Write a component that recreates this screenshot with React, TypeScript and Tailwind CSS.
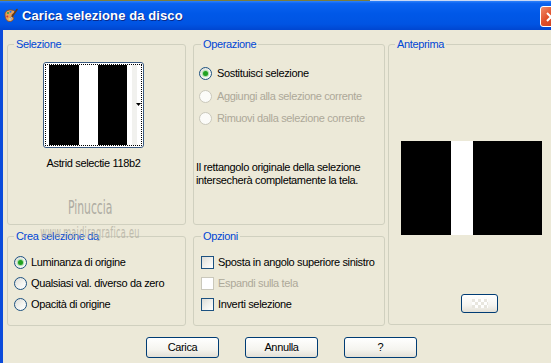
import React from 'react';

// XP-style "Carica selezione da disco" dialog
const FONT = "font-['Liberation_Sans',Arial,sans-serif]";

const Radio: React.FC<{ checked?: boolean; disabled?: boolean }> = ({ checked, disabled }) => (
    <span
        className={`inline-flex shrink-0 w-[13px] h-[13px] rounded-full border items-center justify-center ${
            disabled
                ? 'border-[#CAC8BB] bg-[#FBFBF8]'
                : 'border-[#1C5180] bg-[linear-gradient(135deg,#DCDCD7_0%,#F4F4F0_55%,#FFFFFF_100%)]'
        }`}
    >
        {checked && <span className="w-[5px] h-[5px] rounded-full bg-[#21A121] shadow-[0_0_1px_1px_#A4DCA4]" />}
    </span>
);

const Check: React.FC<{ disabled?: boolean }> = ({ disabled }) => (
    <span
        className={`inline-block shrink-0 w-[13px] h-[13px] border ${
            disabled
                ? 'border-[#CAC8BB] bg-white'
                : 'border-[#1C5180] bg-[linear-gradient(135deg,#DCDCD7_0%,#F2F2EE_55%,#FFFFFF_100%)]'
        }`}
    />
);

const GroupBox: React.FC<{ label: string; className?: string; labelLeft?: string; children?: React.ReactNode }> = ({
    label,
    className,
    labelLeft = 'left-[6px]',
    children,
}) => (
    <div className={`relative shrink-0 border border-[#D0D0BF] rounded-[3px] ${className ?? ''}`}>
        <span className={`absolute -top-[7px] ${labelLeft} px-[2px] bg-[#ECE9D8] text-[#0046D5] leading-[13px] whitespace-nowrap`}>
            {label}
        </span>
        {children}
    </div>
);

const XpButton: React.FC<{ children?: React.ReactNode; className?: string }> = ({ children, className }) => (
    <button
        className={`flex shrink-0 items-center justify-center border border-[#003C74] rounded-[3px] bg-[linear-gradient(180deg,#FFFFFF_0%,#F5F4EF_60%,#E3E0D6_100%)] text-black leading-[13px] ${className ?? ''}`}
    >
        {children}
    </button>
);

const PaletteIcon = () => (
    <svg width="16" height="16" viewBox="0 0 16 16">
        <path d="M2 6 C2 2.5 7 1 10.5 2.5 C13 3.5 12 6 10 6 C8.5 6 9 8.5 10.5 9.5 C11.5 10.5 9.5 14 6 13.5 C3 13 2 9.5 2 6 Z" fill="#E8A25A" stroke="#8A4A1A" strokeWidth="0.8" />
        <circle cx="5" cy="5" r="1.1" fill="#2FA04A" />
        <circle cx="7.5" cy="3.8" r="1" fill="#2A6FE0" />
        <circle cx="4.3" cy="8.5" r="1" fill="#D63A2A" />
        <circle cx="6.5" cy="11" r="1" fill="#F4E04A" />
        <path d="M14 1.5 L8 10" stroke="#6A3A12" strokeWidth="1.6" strokeLinecap="round" />
        <path d="M8.4 9.4 L7 12" stroke="#C0C0C0" strokeWidth="1.6" strokeLinecap="round" />
    </svg>
);

const Row: React.FC<{ children?: React.ReactNode; className?: string }> = ({ children, className }) => (
    <div className={`flex items-center leading-[13px] whitespace-nowrap ${className ?? ''}`}>{children}</div>
);

const App: React.FC = () => {
    return (
        <div className={`relative w-[551px] h-[363px] overflow-hidden bg-[#ECE9D8] text-[11px] tracking-[-0.35px] text-black ${FONT}`}>
            {/* title bar */}
            <div className="relative h-[30px] flex items-center bg-[linear-gradient(180deg,#3B8DFF_0%,#0A62F0_12%,#0058E8_45%,#0054E3_80%,#0046D0_100%)]">
                <div className="absolute top-0 left-0 right-0 h-[1px] flex">
                    <div className="w-[370px] bg-[#7C7C3C]" />
                    <div className="flex-1 bg-[#C9D8F4]" />
                </div>
                <div className="ml-[3px] mt-[2px]">
                    <PaletteIcon />
                </div>
                <span className="ml-[3px] mt-[2px] text-white font-bold text-[13px] tracking-[0.1px] [text-shadow:1px_1px_0_#0A2A8A]">
                    Carica selezione da disco
                </span>
                <div className="absolute left-[540px] top-[6px] w-[21px] h-[21px] rounded-[3px] border border-white bg-[linear-gradient(135deg,#F08C6C_0%,#E0502A_45%,#C83A18_100%)] flex items-center pl-[5px]">
                    <svg width="10" height="10" viewBox="0 0 10 10">
                        <path d="M1 1 L9 9 M9 1 L1 9" stroke="white" strokeWidth="2" />
                    </svg>
                </div>
            </div>

            {/* body */}
            <div className="relative h-[333px] border-l-[3px] border-[#0B4BDB] pl-[4px] pt-[14px]">
                <div className="flex">
                    <div className="w-[179px] shrink-0 flex flex-col gap-[11px]">
                        <GroupBox label="Selezione" className="h-[181px]">
                            <div className="pt-[17px] pl-[35px]">
                                <div className="w-[101px] h-[86px] border border-[#3A5A80] rounded-[3px] bg-white p-[1px]">
                                    <div className="relative h-full border border-dotted border-black flex bg-white">
                                        <div className="w-[3px]" />
                                        <div className="w-[30px] bg-black" />
                                        <div className="w-[19px]" />
                                        <div className="w-[29px] bg-black" />
                                        <div className="w-[5px]" />
                                        <div className="w-[5px] bg-[#F1F1EE]" />
                                        <svg className="absolute left-[90px] top-[38px]" width="5" height="3" viewBox="0 0 5 3">
                                            <path d="M0 0 H5 L2.5 3 Z" fill="black" />
                                        </svg>
                                    </div>
                                </div>
                                <div className="w-[101px] mt-[9px] text-center leading-[13px] whitespace-nowrap">Astrid selectie 118b2</div>
                            </div>
                        </GroupBox>
                        <GroupBox label="Crea selezione da" className="h-[90px]">
                            <div className="pt-[19px] pl-[6px] flex flex-col gap-[8px]">
                                <Row className="gap-[4px]">
                                    <Radio checked />
                                    <span>Luminanza di origine</span>
                                </Row>
                                <Row className="gap-[4px]">
                                    <Radio />
                                    <span>Qualsiasi val. diverso da zero</span>
                                </Row>
                                <Row className="gap-[4px]">
                                    <Radio />
                                    <span>Opacità di origine</span>
                                </Row>
                            </div>
                        </GroupBox>
                    </div>

                    <div className="ml-[7px] w-[192px] shrink-0 flex flex-col gap-[11px]">
                        <GroupBox label="Operazione" labelLeft="left-[7px]" className="h-[181px]">
                            <div className="pt-[22px]">
                                <Row className="pl-[5px] gap-[5px]">
                                    <Radio checked />
                                    <span>Sostituisci selezione</span>
                                </Row>
                                <Row className="mt-[10px] pl-[5px] gap-[5px] text-[#ACA899]">
                                    <Radio disabled />
                                    <span>Aggiungi alla selezione corrente</span>
                                </Row>
                                <Row className="mt-[9px] pl-[5px] gap-[5px] text-[#ACA899]">
                                    <Radio disabled />
                                    <span>Rimuovi dalla selezione corrente</span>
                                </Row>
                                <p className="mt-[36px] pl-[2px] leading-[13px] whitespace-nowrap">
                                    Il rettangolo originale della selezione
                                    <br />
                                    intersecherà completamente la tela.
                                </p>
                            </div>
                        </GroupBox>
                        <GroupBox label="Opzioni" labelLeft="left-[7px]" className="h-[90px]">
                            <div className="pt-[19px] pl-[7px] flex flex-col gap-[8px]">
                                <Row className="gap-[4px]">
                                    <Check />
                                    <span>Sposta in angolo superiore sinistro</span>
                                </Row>
                                <Row className="gap-[4px] text-[#ACA899]">
                                    <Check disabled />
                                    <span>Espandi sulla tela</span>
                                </Row>
                                <Row className="gap-[4px]">
                                    <Check />
                                    <span>Inverti selezione</span>
                                </Row>
                            </div>
                        </GroupBox>
                    </div>

                    <GroupBox label="Anteprima" className="ml-[3px] w-[175px] h-[281px]">
                        <div className="pl-[12px] pt-[96px]">
                            <div className="w-[141px] h-[94px] bg-black flex">
                                <div className="ml-[50px] w-[22px] bg-white" />
                            </div>
                            <XpButton className="ml-[60px] mt-[59px] w-[37px] h-[19px]">
                                <span className="w-[16px] h-[9px] bg-[repeating-conic-gradient(#FFFFFF_0%_25%,#E6E4DC_0%_50%)] bg-[length:6px_6px] opacity-90" />
                            </XpButton>
                        </div>
                    </GroupBox>
                </div>

                {/* dialog buttons */}
                <div className="mt-[11px] ml-[139px] flex gap-[26px]">
                    <XpButton className="w-[73px] h-[21px]">Carica</XpButton>
                    <XpButton className="w-[73px] h-[21px]">Annulla</XpButton>
                    <XpButton className="w-[73px] h-[21px]">?</XpButton>
                </div>

                {/* watermark */}
                <div className="absolute left-[51px] top-[167px] w-[70px] text-center text-[20px] leading-[20px] tracking-normal text-[#A8A69D] font-['DejaVu_Sans_Condensed','DejaVu_Sans',sans-serif] scale-x-[0.6] opacity-90 pointer-events-none">
                    Pinuccia
                </div>
                <div className="absolute left-[2px] top-[195px] w-[170px] text-center text-[15px] leading-[16px] tracking-[0.5px] text-[#B4B1A4] font-['DejaVu_Sans_Condensed','DejaVu_Sans',sans-serif] scale-x-[0.6] opacity-80 pointer-events-none whitespace-nowrap">
                    www.maidiragrafica.eu
                </div>
            </div>
        </div>
    );
};

export default App;
